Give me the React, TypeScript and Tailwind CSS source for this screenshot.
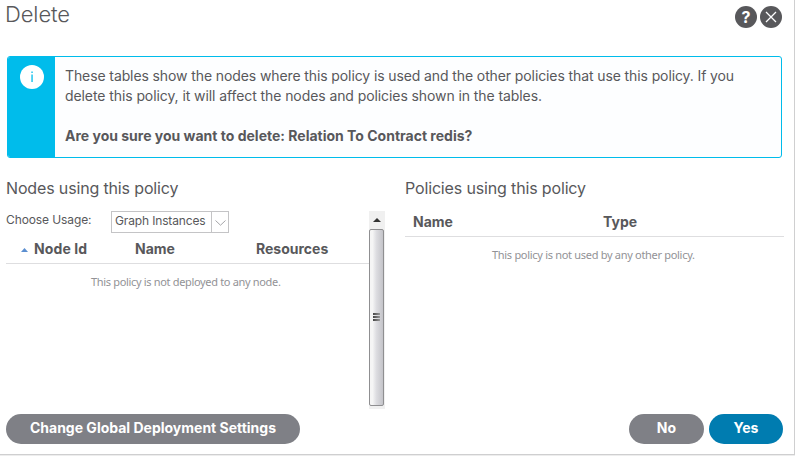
import type { ReactNode } from 'react';

function RoundIcon({ children }: { children: ReactNode }) {
  return (
    <button className="flex h-[22px] w-[22px] items-center justify-center rounded-full bg-[#58585b] text-white">
      {children}
    </button>
  );
}

function Header() {
  return (
    <header className="flex h-14 items-start justify-between pl-[5px] pr-[12px]">
      <h1 className="mt-[-1px] text-[22px] leading-[30px] font-light tracking-[-0.1px]">Delete</h1>
      <div className="mt-[6px] flex gap-[3px]">
        <RoundIcon>
          <span className="text-[16px] leading-none font-bold">?</span>
        </RoundIcon>
        <RoundIcon>
          <svg width="12" height="12" viewBox="0 0 12 12" fill="none" stroke="currentColor" strokeWidth="1.3">
            <path d="M1 1 11 11M11 1 1 11" />
          </svg>
        </RoundIcon>
      </div>
    </header>
  );
}

function Alert() {
  return (
    <section className="ml-[7px] flex h-[102px] w-[775px] overflow-hidden rounded-[3px] border border-[#00bceb] bg-[#fdfeff]">
      <div className="flex w-[47px] shrink-0 justify-center bg-[#00bceb] pt-[8px]">
        <div className="flex h-6 w-6 items-center justify-center rounded-full bg-white">
          <svg width="4" height="12" viewBox="0 0 4 12" fill="#00bceb">
            <rect x="1.4" y="0.5" width="1.3" height="1.5" />
            <rect x="1.4" y="3.5" width="1.3" height="7.5" />
          </svg>
        </div>
      </div>
      <div className="pt-[9px] pl-[10px] text-[14px] leading-5 whitespace-nowrap">
        <p className="tracking-[-0.105px]">These tables show the nodes where this policy is used and the other policies that use this policy. If you</p>
        <p className="tracking-[-0.085px]">delete this policy, it will affect the nodes and policies shown in the tables.</p>
        <p className="mt-5 font-bold">Are you sure you want to delete: Relation To Contract redis?</p>
      </div>
    </section>
  );
}

function ScrollBar() {
  return (
    <div className="flex h-[198px] w-4 shrink-0 flex-col items-center bg-[#f0f0f0]">
      <div className="flex h-[18px] items-center justify-center">
        <svg width="8" height="4" viewBox="0 0 8 4" fill="#333">
          <path d="M0 4 4 0 8 4Z" />
        </svg>
      </div>
      <div className="mr-px flex h-[177px] w-[15px] items-center justify-center rounded-[2px] border border-[#8f8f91] bg-linear-to-r from-[#f5f5f5] from-20% via-[#dcdce0] via-50% to-[#c4c4c9] pb-[2px]">
        <div className="flex w-[7px] flex-col gap-px">
          <i className="h-[2px] bg-linear-to-r from-[#444] to-[#999]" />
          <i className="h-[2px] bg-linear-to-r from-[#444] to-[#999]" />
          <i className="h-[2px] bg-linear-to-r from-[#444] to-[#999]" />
        </div>
      </div>
    </div>
  );
}

function NodesPanel() {
  return (
    <section className="w-[379px] shrink-0">
      <h2 className="h-[35px] text-[16px] leading-[24px] tracking-[-0.15px] whitespace-nowrap">Nodes using this policy</h2>
      <div className="flex">
        <div className="w-[363px] shrink-0">
          <div className="flex h-[22px] text-[12px] whitespace-nowrap">
            <label className="w-[105px] leading-[18px] tracking-[-0.1px]">Choose Usage:</label>
            <div className="flex h-[22px] w-[118px] border border-[#c4c4c6]">
              <span className="w-[100px] border-r border-[#c4c4c6] pl-[3px] leading-[18px] tracking-[-0.15px]">Graph Instances</span>
              <span className="flex flex-1 items-center justify-center pt-px text-[#a5a5a8]">
                <svg width="11" height="6" viewBox="0 0 11 6" fill="none" stroke="currentColor">
                  <path d="M.5.5 5.5 5.2 10.5.5" />
                </svg>
              </span>
            </div>
          </div>
          <div className="flex h-[31px] items-center border-b border-[#dedee0] pt-[2px] text-[14px] leading-5 font-bold">
            <span className="flex w-[28px] items-center pt-[2px] pl-[15px]">
              <svg width="7" height="4" viewBox="0 0 7 4" fill="#5b8fd0">
                <path d="M0 4 3.5 0 7 4Z" />
              </svg>
            </span>
            <span className="w-[101px] tracking-[0.1px]">Node Id</span>
            <span className="w-[121px]">Name</span>
            <span>Resources</span>
          </div>
          <p className="pt-[10px] pl-[85px] font-['Noto_Sans',sans-serif] text-[11px] leading-4 tracking-[-0.33px] whitespace-nowrap text-[#929296]">This policy is not deployed to any node.</p>
        </div>
        <ScrollBar />
      </div>
    </section>
  );
}

function PoliciesPanel() {
  return (
    <section className="ml-5 w-[379px] shrink-0">
      <h2 className="h-[35px] text-[16px] leading-[24px] tracking-[-0.15px] whitespace-nowrap">Policies using this policy</h2>
      <div className="flex h-[26px] border-b border-[#dedee0] pl-2 text-[14px] leading-[22px] font-bold">
        <span className="w-[190px]">Name</span>
        <span>Type</span>
      </div>
      <p className="pt-[10px] pl-[87px] font-['Noto_Sans',sans-serif] text-[11px] leading-4 tracking-[-0.3px] whitespace-nowrap text-[#929296]">This policy is not used by any other policy.</p>
    </section>
  );
}

function Footer() {
  return (
    <footer className="flex h-[40px] pr-[11px] pl-[6px] text-[14px] font-bold text-white">
      <button className="h-[30px] w-[294px] rounded-full bg-[#7f8086] pb-[4px]">Change Global Deployment Settings</button>
      <button className="ml-auto h-[30px] w-[75px] rounded-full bg-[#7f8086] pb-[4px]">No</button>
      <button className="ml-[5px] h-[30px] w-[74px] rounded-full bg-[#007cb0] pb-[4px]">Yes</button>
    </footer>
  );
}

export default function App() {
  return (
    <div className="h-[456px] w-[795px] overflow-hidden bg-[#ededed]">
      <div className="flex h-[455px] flex-col border-r border-b border-[#cfcfd0] bg-white font-[Inter,sans-serif] text-[#58585b]">
        <Header />
        <Alert />
        <main className="flex h-[256px] pt-[18px] pl-[6px]">
          <NodesPanel />
          <PoliciesPanel />
        </main>
        <Footer />
      </div>
    </div>
  );
}
